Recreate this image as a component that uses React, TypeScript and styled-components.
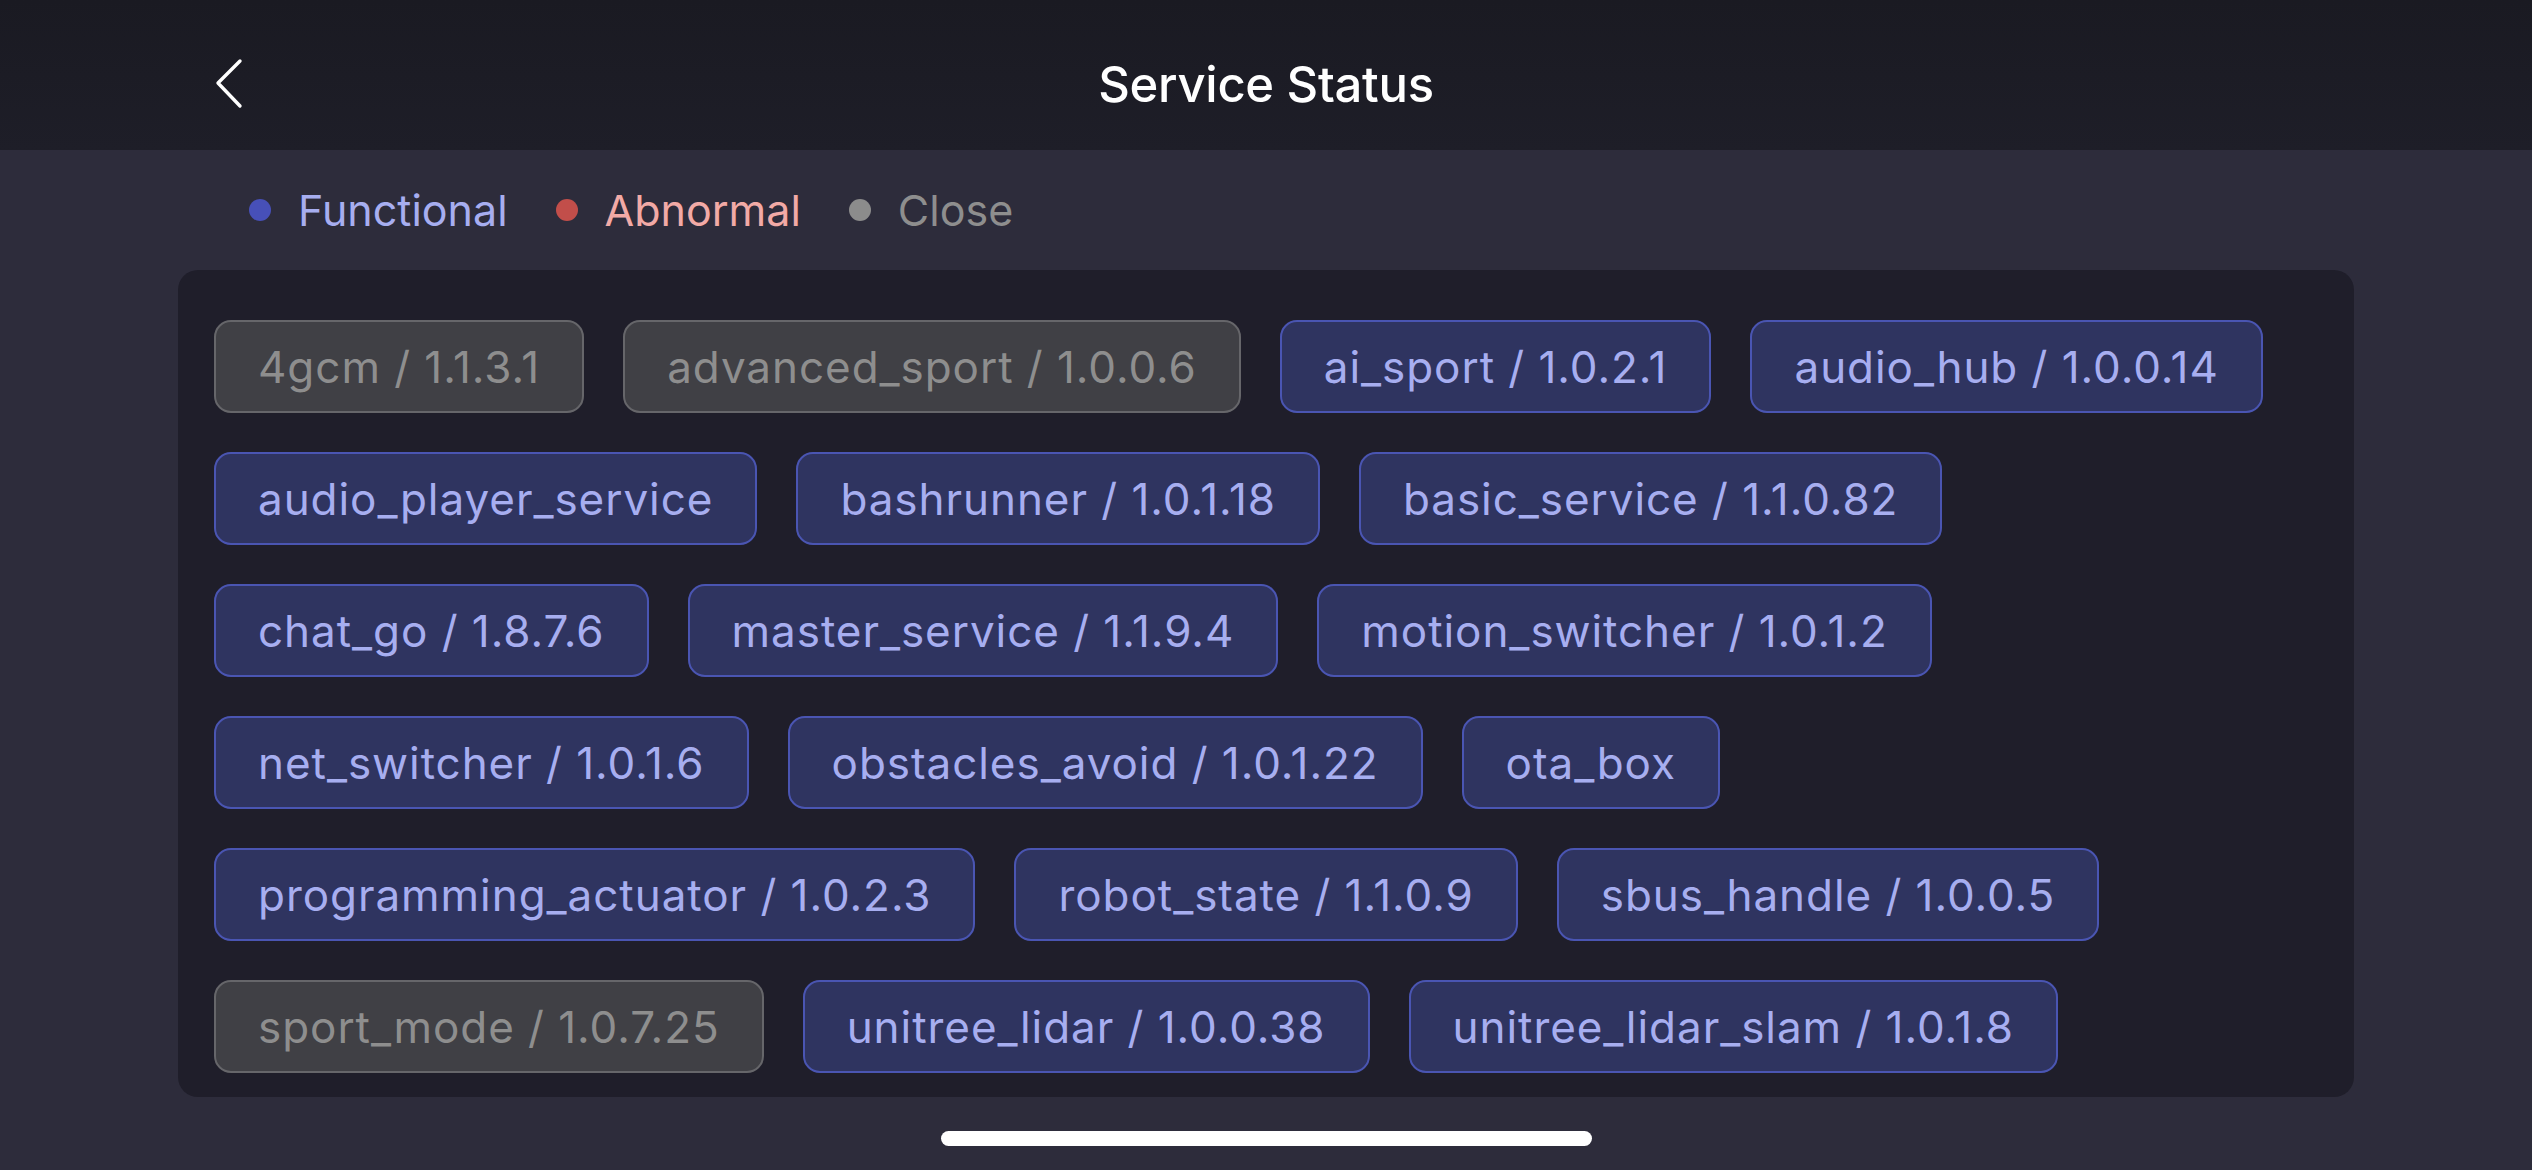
import styled, { createGlobalStyle } from 'styled-components';

type Status = 'ok' | 'bad' | 'off';

interface Service {
  name: string;
  version?: string;
  status: Status;
}

const services: Service[] = [
  { name: '4gcm', version: '1.1.3.1', status: 'off' },
  { name: 'advanced_sport', version: '1.0.0.6', status: 'off' },
  { name: 'ai_sport', version: '1.0.2.1', status: 'ok' },
  { name: 'audio_hub', version: '1.0.0.14', status: 'ok' },
  { name: 'audio_player_service', status: 'ok' },
  { name: 'bashrunner', version: '1.0.1.18', status: 'ok' },
  { name: 'basic_service', version: '1.1.0.82', status: 'ok' },
  { name: 'chat_go', version: '1.8.7.6', status: 'ok' },
  { name: 'master_service', version: '1.1.9.4', status: 'ok' },
  { name: 'motion_switcher', version: '1.0.1.2', status: 'ok' },
  { name: 'net_switcher', version: '1.0.1.6', status: 'ok' },
  { name: 'obstacles_avoid', version: '1.0.1.22', status: 'ok' },
  { name: 'ota_box', status: 'ok' },
  { name: 'programming_actuator', version: '1.0.2.3', status: 'ok' },
  { name: 'robot_state', version: '1.1.0.9', status: 'ok' },
  { name: 'sbus_handle', version: '1.0.0.5', status: 'ok' },
  { name: 'sport_mode', version: '1.0.7.25', status: 'off' },
  { name: 'unitree_lidar', version: '1.0.0.38', status: 'ok' },
  { name: 'unitree_lidar_slam', version: '1.0.1.8', status: 'ok' },
];

const palette = {
  ok: { dot: '#4750b8', text: '#a7aef0', bg: '#2f3460', border: '#4a55b2' },
  bad: { dot: '#c24e4a', text: '#f2aaa6', bg: '#4a2a30', border: '#a04848' },
  off: { dot: '#8c8c8c', text: '#8e8e8e', bg: '#404045', border: '#66666a' },
};

export default function App() {
  return (
    <>
      <GlobalStyle />
      <Page>
        <Header>
          <BackButton aria-label="back">
            <svg width="30" height="52" viewBox="0 0 30 52" fill="none">
              <path d="M25 3 L3 25 L25 48" stroke="#ffffff" strokeWidth="3.4" strokeLinecap="round" strokeLinejoin="round" />
            </svg>
          </BackButton>
          <Title>Service Status</Title>
        </Header>

        <Legend>
          <LegendItem $status="ok">
            <Dot $status="ok" />
            Functional
          </LegendItem>
          <LegendItem $status="bad">
            <Dot $status="bad" />
            Abnormal
          </LegendItem>
          <LegendItem $status="off">
            <Dot $status="off" />
            Close
          </LegendItem>
        </Legend>

        <Panel>
          {services.map((s) => (
            <Tag key={s.name} $status={s.status}>
              {s.version ? `${s.name} / ${s.version}` : s.name}
            </Tag>
          ))}
        </Panel>

        <HomeBar />
      </Page>
    </>
  );
}

const GlobalStyle = createGlobalStyle`
  html, body {
    margin: 0;
    padding: 0;
    background: #2d2c3b;
  }
  body {
    font-family: Inter, "Noto Sans", "Liberation Sans", sans-serif;
    -webkit-font-smoothing: antialiased;
  }
`;

const Page = styled.div`
  width: 2532px;
  height: 1170px;
  display: flex;
  flex-direction: column;
  background: #2d2c3b;
  overflow: hidden;
`;

const Header = styled.header`
  height: 150px;
  box-sizing: border-box;
  padding-top: 18px;
  flex-shrink: 0;
  display: flex;
  align-items: center;
  justify-content: center;
  position: relative;
  background: linear-gradient(180deg, #1a1a22 0%, #1e1e28 100%);
`;

const BackButton = styled.button`
  position: absolute;
  left: 215px;
  top: 58px;
  padding: 0;
  border: none;
  background: transparent;
  display: flex;
`;

const Title = styled.h1`
  margin: 0;
  color: #ffffff;
  font-size: 49px;
  font-weight: 500;
  letter-spacing: -0.3px;
`;

const Legend = styled.div`
  height: 120px;
  display: flex;
  align-items: center;
  gap: 48px;
  padding-left: 249px;
`;

const LegendItem = styled.div<{ $status: Status }>`
  display: flex;
  align-items: center;
  gap: 27px;
  font-size: 43px;
  color: ${(p) => palette[p.$status].text};
`;

const Dot = styled.span<{ $status: Status }>`
  width: 22px;
  height: 22px;
  border-radius: 50%;
  background: ${(p) => palette[p.$status].dot};
`;

const Panel = styled.div`
  margin: 0 178px;
  height: 827px;
  box-sizing: border-box;
  padding: 50px 36px 24px;
  border-radius: 20px;
  background: #1f1e2a;
  display: flex;
  flex-wrap: wrap;
  align-content: flex-start;
  gap: 39px;
`;

const Tag = styled.div<{ $status: Status }>`
  height: 93px;
  box-sizing: border-box;
  padding: 0 42px;
  display: inline-flex;
  align-items: center;
  border-radius: 17px;
  border: 2px solid ${(p) => palette[p.$status].border};
  background: ${(p) => palette[p.$status].bg};
  color: ${(p) => palette[p.$status].text};
  font-size: 44px;
  letter-spacing: 0.95px;
  white-space: nowrap;
`;

const HomeBar = styled.div`
  width: 651px;
  height: 15px;
  margin: 34px auto 0;
  border-radius: 8px;
  background: #ffffff;
`;
